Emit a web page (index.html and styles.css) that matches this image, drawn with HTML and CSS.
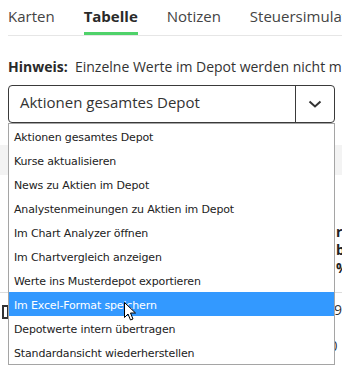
FILE: index.html
```html
<!DOCTYPE html>
<html lang="de">
<head>
<meta charset="utf-8">
<link rel="stylesheet" href="styles.css">
</head>
<body>
<div class="page">
  <nav class="tabs">
    <span class="tab">Karten</span>
    <span class="tab active">Tabelle</span>
    <span class="tab">Notizen</span>
    <span class="tab">Steuersimulation</span>
  </nav>
  <p class="hint"><b>Hinweis:</b>&nbsp; Einzelne Werte im Depot werden nicht mit einbezogen</p>
  <div class="select">
    <span class="select-value">Aktionen gesamtes Depot</span>
    <span class="select-btn">
      <svg width="14" height="8" viewBox="0 0 14 8"><path d="M1.5 1.5 L7 6.5 L12.5 1.5" fill="none" stroke="#333" stroke-width="2"/></svg>
    </span>
  </div>
  <div class="band"></div>
  <div class="thead">
    <span class="tcell bold">r</span>
    <span class="tcell bold">b</span>
    <span class="tcell bold">%</span>
  </div>
  <div class="trow">
    <span class="check"></span>
    <div class="tvals">
      <span class="tcell">79</span>
      <span class="tcell pad">(</span>
      <span class="tcell">,0</span>
    </div>
  </div>
</div>
<ul class="menu">
  <li>Aktionen gesamtes Depot</li>
  <li>Kurse aktualisieren</li>
  <li>News zu Aktien im Depot</li>
  <li>Analystenmeinungen zu Aktien im Depot</li>
  <li>Im Chart Analyzer öffnen</li>
  <li>Im Chartvergleich anzeigen</li>
  <li>Werte ins Musterdepot exportieren</li>
  <li class="hl">Im Excel-Format speichern</li>
  <li>Depotwerte intern übertragen</li>
  <li>Standardansicht wiederherstellen</li>
</ul>
<svg class="cursor" width="13" height="20" viewBox="0 0 13 20"><path d="M0.5 0.5 L0.5 15.5 L4 12 L6.5 18 L9 17 L6.5 11 L11.5 11 Z" fill="#fff" stroke="#000" stroke-width="1"/></svg>
</body>
</html>
```
FILE: styles.css
```css
html, body {
  margin: 0;
  padding: 0;
  background: #fff;
  overflow: hidden;
}
body {
  width: 342px;
  height: 372px;
  position: relative;
  font-family: "Open Sans", sans-serif;
  color: #333;
}
.page {
  padding: 0 0 0 8px;
  overflow: hidden;
}
.tabs {
  display: flex;
  gap: 29px;
  border-bottom: 1px solid #e6e6e6;
  white-space: nowrap;
  height: 35px;
}
.tab {
  font-size: 15px;
  line-height: 20px;
  padding: 6px 0 7px;
  border-bottom: 3px solid transparent;
  color: #444;
}
.tab.active {
  font-weight: 700;
  color: #2a2a2a;
  border-bottom-color: #4fd26a;
}
.hint {
  margin: 21px 0 0;
  font-size: 14px;
  line-height: 20px;
  white-space: nowrap;
  color: #333;
}
.hint b {
  color: #2a2a2a;
}
.select {
  margin-top: 8px;
  width: 325px;
  height: 36px;
  border: 1px solid #3a3a3a;
  border-radius: 4px;
  display: flex;
  box-sizing: content-box;
}
.select-value {
  flex: 1;
  font-size: 15px;
  line-height: 20px;
  padding: 6px 0 0 11px;
  color: #333;
  border-right: 1px solid #3a3a3a;
}
.select-btn {
  width: 38px;
  display: flex;
  align-items: center;
  justify-content: center;
}
.band {
  margin: 22px 0 0 -8px;
  height: 30px;
  background: #f3f3f3;
}
.thead {
  display: flex;
  flex-direction: column;
  padding: 48px 0 15px 336px;
  border-bottom: 1px solid #ddd;
  margin-left: -8px;
}
.tcell {
  font-size: 14px;
  line-height: 18px;
  white-space: nowrap;
}
.tcell.pad {
  padding-left: 4px;
}
.bold {
  font-weight: 700;
  color: #222;
}
.trow {
  display: flex;
  margin-left: -8px;
  padding-top: 8px;
}
.check {
  width: 10px;
  height: 10px;
  border: 2px solid #333;
  margin: 4px 0 0 2px;
}
.tvals {
  display: flex;
  flex-direction: column;
  margin-left: 317px;
}
.menu {
  position: absolute;
  top: 123px;
  left: 8px;
  width: 325px;
  margin: 0;
  padding: 0;
  list-style: none;
  background: #fff;
  border: 1px solid #a5a5a5;
  font-family: "DejaVu Sans", sans-serif;
  font-size: 11px;
  letter-spacing: -0.15px;
}
.menu li {
  height: 22px;
  line-height: 24px;
  padding: 2px 0 0 5px;
  color: #222;
  white-space: nowrap;
}
.menu li.hl {
  background: #3399ff;
  color: #fff;
}
.cursor {
  position: absolute;
  left: 124px;
  top: 302px;
}
```
